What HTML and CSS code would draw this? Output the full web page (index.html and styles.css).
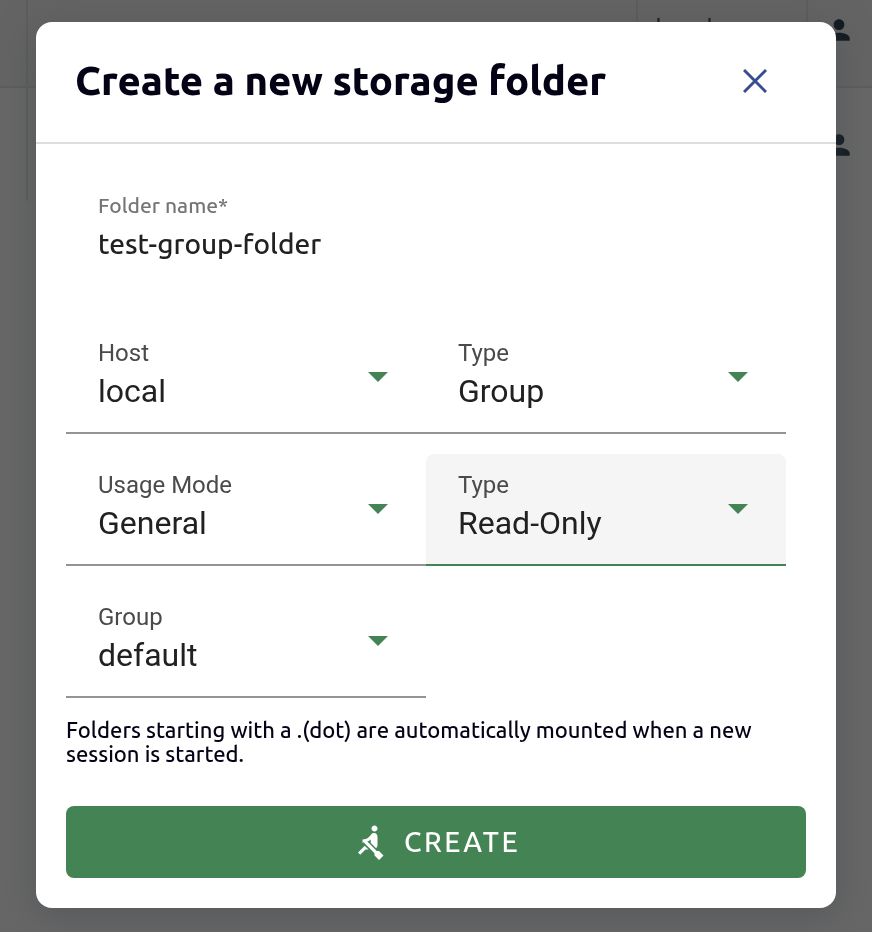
FILE: index.html
```html
<!DOCTYPE html>
<html lang="en">
<head>
<meta charset="utf-8">
<meta name="viewport" content="width=device-width, initial-scale=1">
<title>Create a new storage folder</title>
<link rel="stylesheet" href="styles.css">
</head>
<body>
<svg class="symbols" aria-hidden="true">
  <symbol id="person" viewBox="0 0 24 24"><path d="M12 12c2.200 0 4-1.800 4-4s-1.800-4-4-4-4 1.800-4 4 1.800 4 4 4zm0 2c-2.700 0-8 1.300-8 4v2h16v-2c0-2.700-5.300-4-8-4z"/></symbol>
  <symbol id="arrow" viewBox="0 0 20 10"><path d="M0 0h20L10 10z"/></symbol>
</svg>

<main class="page" aria-hidden="true">
  <table class="folders">
    <tbody>
      <tr><td class="edge"></td><td></td><td class="host">local</td><td class="owner"><svg class="person"><use href="#person"/></svg></td></tr>
      <tr><td class="edge"></td><td></td><td class="host">local</td><td class="owner"><svg class="person"><use href="#person"/></svg></td></tr>
    </tbody>
  </table>
</main>

<div class="overlay">
  <form class="dialog" role="dialog" aria-labelledby="title">
    <header class="header">
      <h1 class="title" id="title">Create a new storage folder</h1>
      <button class="close" type="button" aria-label="Close">
        <svg viewBox="0 0 24 24"><path d="M1 1l22 22M23 1L1 23"/></svg>
      </button>
    </header>
    <div class="content">
      <div class="name">
        <label for="name">Folder name*</label>
        <input id="name" type="text" value="test-group-folder">
      </div>
      <div class="fields">
        <div class="field">
          <label for="host">Host</label>
          <select id="host"><option>local</option></select>
          <svg class="arrow"><use href="#arrow"/></svg>
        </div>
        <div class="field">
          <label for="type">Type</label>
          <select id="type"><option>Group</option></select>
          <svg class="arrow"><use href="#arrow"/></svg>
        </div>
        <div class="field">
          <label for="usage">Usage Mode</label>
          <select id="usage"><option>General</option></select>
          <svg class="arrow"><use href="#arrow"/></svg>
        </div>
        <div class="field active">
          <label for="permission">Type</label>
          <select id="permission"><option>Read-Only</option></select>
          <svg class="arrow"><use href="#arrow"/></svg>
        </div>
        <div class="field">
          <label for="group">Group</label>
          <select id="group"><option>default</option></select>
          <svg class="arrow"><use href="#arrow"/></svg>
        </div>
      </div>
      <p class="note">Folders starting with a .(dot) are automatically mounted when a new session is started.</p>
      <button class="create" type="button">
        <svg viewBox="0 0 24 24" aria-hidden="true"><path d="M8.500 14.500L4 19l1.500 1.500L9 17h2l-2.500-2.500zM15 1c-1.100 0-2 .9-2 2s.9 2 2 2 2-.9 2-2-.9-2-2-2zm6 20.010L18 24l-2.990-3.010V19.500l-7.100-7.090c-.31.05-.61.07-.91.07v-2.160c1.660.03 3.610-.87 4.670-2.040l1.400-1.550c.19-.21.43-.38.69-.5.29-.14.62-.23.96-.23h.03C15.990 6.010 17 7.020 17 8.260v5.750c0 .84-.35 1.610-.92 2.160l-3.580-3.580v-2.270c-.63.52-1.430 1.020-2.290 1.390L16.500 18H18l3 3.010z"/></svg>
        <span>CREATE</span>
      </button>
    </div>
  </form>
</div>
</body>
</html>
```
FILE: styles.css
```css
* { box-sizing: border-box; }

body {
  margin: 0;
  min-height: 100vh;
  background: #676767;
  color: #040316;
  font-family: Ubuntu, "Noto Sans", sans-serif;
  overflow: hidden;
}

.symbols { display: none; }

.page { overflow: hidden; }

.folders {
  width: 100%;
  margin-top: -27px;
  border-collapse: collapse;
  table-layout: fixed;
}

.folders td {
  height: 114px;
  padding: 0;
  border-left: 2px solid #5d5d5d;
}

.folders tr:first-child td {
  background: #646464;
  border-bottom: 2px solid #5d5d5d;
}

.folders td.edge { width: 27px; border-left: 0; }
.folders td.host { width: 170px; padding-left: 17px; color: #11181f; font-size: 28px; }
.folders td.owner { width: 65px; padding-left: 15px; }

.person { display: block; width: 32px; height: 32px; fill: #11181f; }

.overlay {
  position: fixed;
  inset: 0;
  padding: 22px 36px 24px;
  overflow: auto;
}

.dialog {
  background: #fff;
  border-radius: 16px;
  box-shadow: 0 8px 36px rgba(70, 73, 80, 0.5);
}

.header {
  display: flex;
  align-items: center;
  justify-content: space-between;
  height: 122px;
  padding: 0 56px 2px 39px;
  border-bottom: 2px solid #ddd;
}

.title { margin: 0; font-size: 40px; line-height: 50px; font-weight: 800; }

.close {
  display: grid;
  place-items: center;
  width: 50px;
  height: 50px;
  padding: 0;
  border: 0;
  background: none;
}

.close svg {
  width: 24px;
  height: 24px;
  fill: none;
  stroke: #364d8f;
  stroke-width: 3;
}

.content { padding: 46px 30px 30px; }

.name {
  display: flex;
  flex-direction: column;
  height: 132px;
  padding: 0 32px;
}

.name label { color: #757575; font-size: 21px; line-height: 30px; font-weight: 500; }

.name input {
  width: 100%;
  height: 48px;
  padding: 0;
  border: 0;
  outline: 0;
  background: none;
  color: #212121;
  font: 500 28px/48px Ubuntu, "Noto Sans", sans-serif;
}

.fields {
  display: grid;
  grid-template-columns: 1fr 1fr;
  row-gap: 20px;
  margin-right: 20px;
  font-family: Roboto, sans-serif;
}

.field {
  display: grid;
  grid-template-columns: 1fr 20px;
  grid-template-rows: 110px;
  padding-right: 38px;
  border-bottom: 2px solid #949494;
}

.field label {
  grid-area: 1 / 1;
  z-index: 1;
  justify-self: start;
  padding: 15px 0 0 32px;
  color: #4a4a4a;
  font-size: 24px;
  line-height: 32px;
  pointer-events: none;
}

.field select {
  grid-area: 1 / 1 / 2 / 3;
  width: 100%;
  height: 100%;
  padding: 27px 20px 0 32px;
  border: 0;
  outline: 0;
  appearance: none;
  background: none;
  color: #212121;
  font: 32px/40px Roboto, sans-serif;
}

.arrow {
  grid-area: 1 / 2;
  align-self: center;
  width: 20px;
  height: 10px;
  fill: #448354;
  pointer-events: none;
}

.field.active {
  background: #f5f5f5;
  border-bottom-color: #448354;
  border-radius: 8px 8px 0 0;
}

.note {
  margin: 20px 0 40px;
  font-size: 22px;
  line-height: 24px;
  font-weight: 500;
}

.create {
  display: flex;
  align-items: center;
  justify-content: center;
  gap: 16px;
  width: 100%;
  height: 72px;
  padding: 0;
  border: 0;
  border-radius: 8px;
  background: #448354;
  color: #fff;
  font: 500 28px/36px Ubuntu, "Noto Sans", sans-serif;
  letter-spacing: 0.09em;
}

.create svg { width: 36px; height: 36px; fill: currentColor; }
```
